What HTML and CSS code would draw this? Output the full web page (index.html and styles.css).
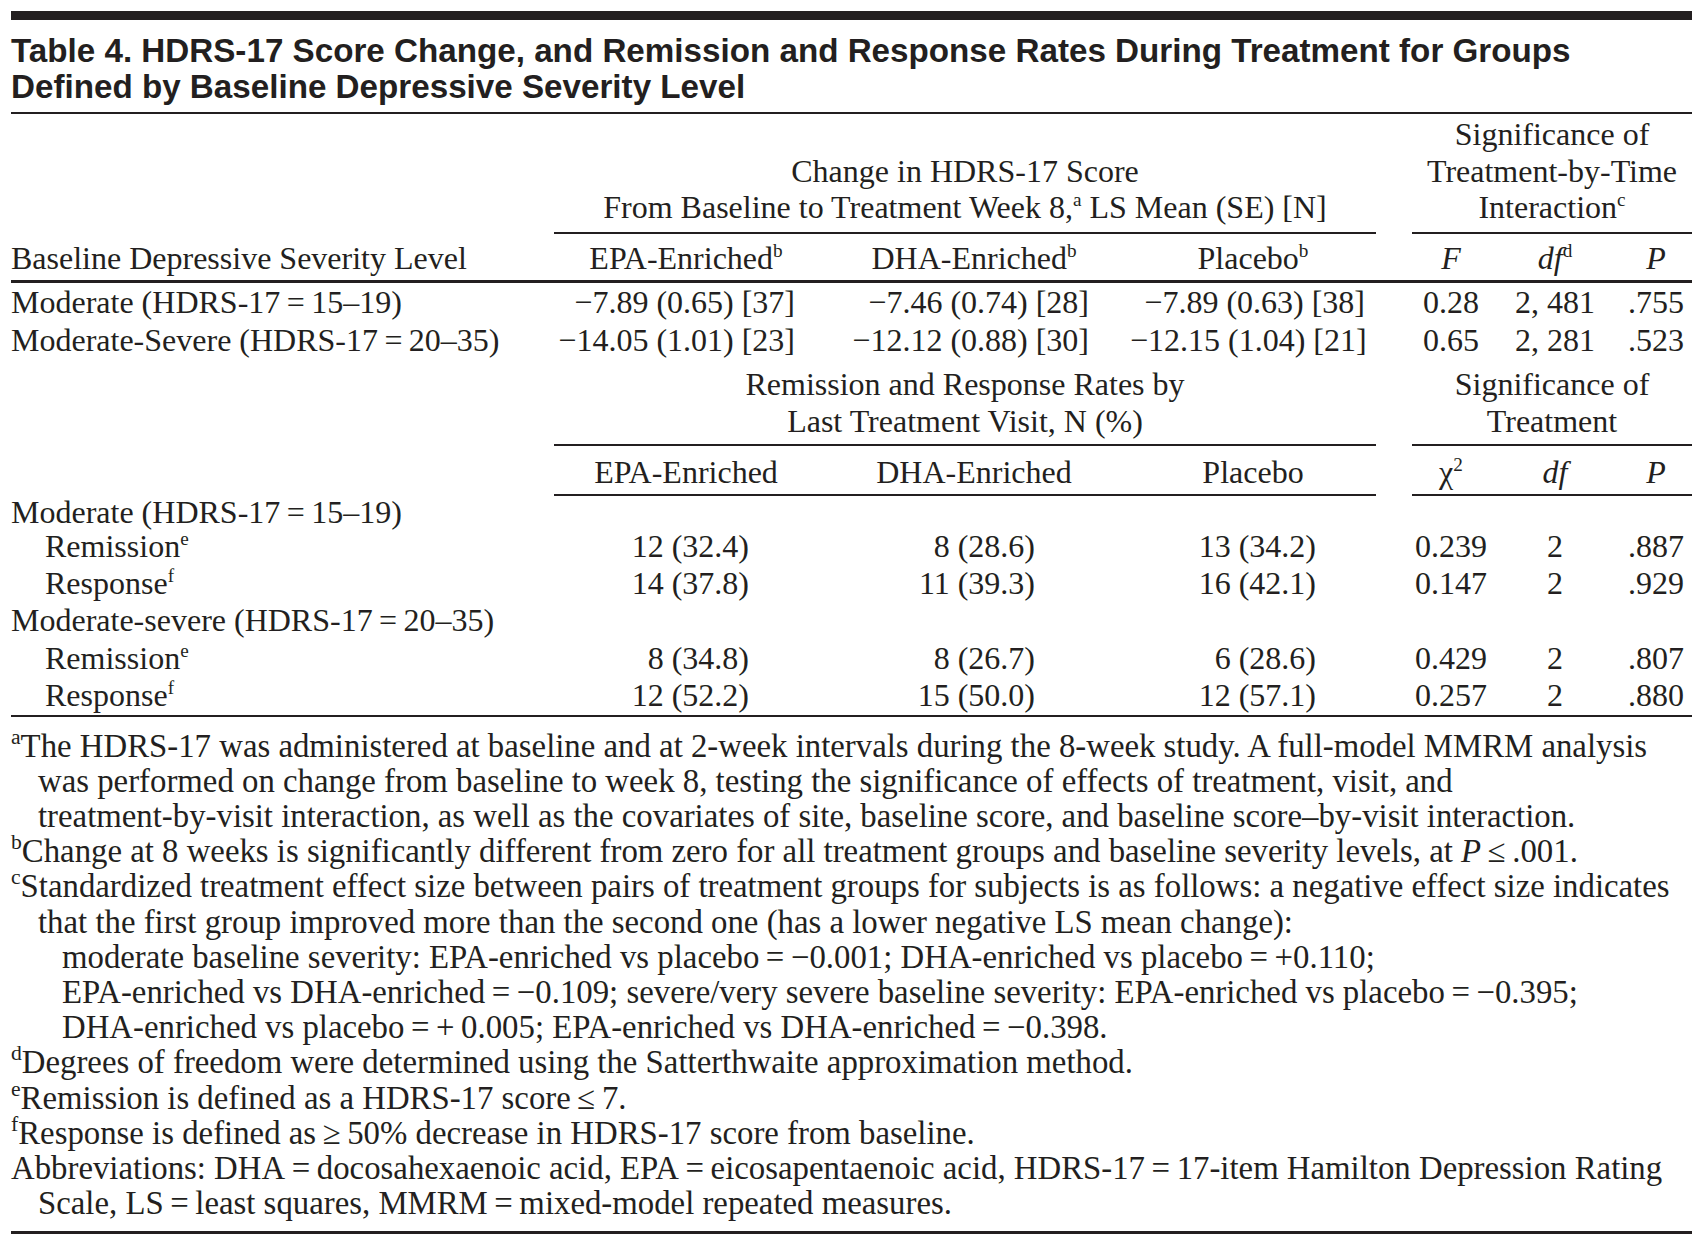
FILE: index.html
```html
<!DOCTYPE html>
<html lang="en">
<head>
<meta charset="utf-8">
<title>Table 4</title>
<link rel="stylesheet" href="styles.css">
</head>
<body>
<div class="page">
  <div class="topbar"></div>
  <h1 class="title">Table 4. HDRS-17 Score Change, and Remission and Response Rates During Treatment for Groups<br>Defined by Baseline Depressive Severity Level</h1>

  <table class="tbl">
    <colgroup>
      <col class="c-lbl"><col class="c-epa"><col class="c-dha"><col class="c-pla"><col class="c-gap"><col class="c-s1"><col class="c-s2"><col class="c-s3">
    </colgroup>
    <thead>
      <tr class="r-group">
        <th class="lbl"></th>
        <th class="span" colspan="3">Change in HDRS-17 Score<br>From Baseline to Treatment Week 8,<sup>a</sup> LS Mean (SE) [N]</th>
        <th class="gap"></th>
        <th class="span" colspan="3">Significance of<br>Treatment-by-Time<br>Interaction<sup>c</sup></th>
      </tr>
      <tr class="r-cols">
        <th class="lbl">Baseline Depressive Severity Level</th>
        <th>EPA-Enriched<sup>b</sup></th>
        <th>DHA-Enriched<sup>b</sup></th>
        <th>Placebo<sup>b</sup></th>
        <th class="gap"></th>
        <th><i>F</i></th>
        <th><i>df</i><sup>d</sup></th>
        <th><i>P</i></th>
      </tr>
    </thead>
    <tbody class="sec1">
      <tr class="r-data">
        <td class="lbl">Moderate (HDRS-17&#8201;=&#8201;15–19)</td>
        <td>−7.89 (0.65) [37]</td>
        <td>−7.46 (0.74) [28]</td>
        <td>−7.89 (0.63) [38]</td>
        <td class="gap"></td>
        <td>0.28</td>
        <td>2, 481</td>
        <td>.755</td>
      </tr>
      <tr class="r-data">
        <td class="lbl">Moderate-Severe (HDRS-17&#8201;=&#8201;20–35)</td>
        <td>−14.05 (1.01) [23]</td>
        <td>−12.12 (0.88) [30]</td>
        <td>−12.15 (1.04) [21]</td>
        <td class="gap"></td>
        <td>0.65</td>
        <td>2, 281</td>
        <td>.523</td>
      </tr>
    </tbody>
    <tbody class="sec2">
      <tr class="r-group2">
        <th class="lbl"></th>
        <th class="span" colspan="3">Remission and Response Rates by<br>Last Treatment Visit, N (%)</th>
        <th class="gap"></th>
        <th class="span" colspan="3">Significance of<br>Treatment</th>
      </tr>
      <tr class="r-cols2">
        <th class="lbl"></th>
        <th class="ul">EPA-Enriched</th>
        <th class="ul">DHA-Enriched</th>
        <th class="ul">Placebo</th>
        <th class="gap"></th>
        <th class="ul">χ<sup>2</sup></th>
        <th class="ul"><i>df</i></th>
        <th class="ul"><i>P</i></th>
      </tr>
      <tr class="r-first">
        <td class="lbl">Moderate (HDRS-17&#8201;=&#8201;15–19)</td>
        <td></td><td></td><td></td><td class="gap"></td><td></td><td></td><td></td>
      </tr>
      <tr class="r-rate">
        <td class="lbl sub">Remission<sup>e</sup></td>
        <td>12 (32.4)</td>
        <td>8 (28.6)</td>
        <td>13 (34.2)</td>
        <td class="gap"></td>
        <td>0.239</td>
        <td>2</td>
        <td>.887</td>
      </tr>
      <tr class="r-rate">
        <td class="lbl sub">Response<sup>f</sup></td>
        <td>14 (37.8)</td>
        <td>11 (39.3)</td>
        <td>16 (42.1)</td>
        <td class="gap"></td>
        <td>0.147</td>
        <td>2</td>
        <td>.929</td>
      </tr>
      <tr class="r-rate">
        <td class="lbl">Moderate-severe (HDRS-17&#8201;=&#8201;20–35)</td>
        <td></td><td></td><td></td><td class="gap"></td><td></td><td></td><td></td>
      </tr>
      <tr class="r-rate">
        <td class="lbl sub">Remission<sup>e</sup></td>
        <td>8 (34.8)</td>
        <td>8 (26.7)</td>
        <td>6 (28.6)</td>
        <td class="gap"></td>
        <td>0.429</td>
        <td>2</td>
        <td>.807</td>
      </tr>
      <tr class="r-rate">
        <td class="lbl sub">Response<sup>f</sup></td>
        <td>12 (52.2)</td>
        <td>15 (50.0)</td>
        <td>12 (57.1)</td>
        <td class="gap"></td>
        <td>0.257</td>
        <td>2</td>
        <td>.880</td>
      </tr>
    </tbody>
  </table>

  <div class="notes">
    <div class="note"><sup>a</sup>The HDRS-17 was administered at baseline and at 2-week intervals during the 8-week study. A full-model MMRM analysis<br>was performed on change from baseline to week 8, testing the significance of effects of treatment, visit, and<br>treatment-by-visit interaction, as well as the covariates of site, baseline score, and baseline score–by-visit interaction.</div>
    <div class="note"><sup>b</sup>Change at 8 weeks is significantly different from zero for all treatment groups and baseline severity levels, at <i>P</i>&#8201;≤&#8201;.001.</div>
    <div class="note"><sup>c</sup>Standardized treatment effect size between pairs of treatment groups for subjects is as follows: a negative effect size indicates<br>that the first group improved more than the second one (has a lower negative LS mean change):
      <div class="subnote">moderate baseline severity: EPA-enriched vs placebo&#8201;=&#8201;−0.001; DHA-enriched vs placebo&#8201;=&#8201;+0.110;<br>EPA-enriched vs DHA-enriched&#8201;=&#8201;−0.109; severe/very severe baseline severity: EPA-enriched vs placebo&#8201;=&#8201;−0.395;<br>DHA-enriched vs placebo&#8201;=&#8201;+&#8201;0.005; EPA-enriched vs DHA-enriched&#8201;=&#8201;−0.398.</div>
    </div>
    <div class="note"><sup>d</sup>Degrees of freedom were determined using the Satterthwaite approximation method.</div>
    <div class="note"><sup>e</sup>Remission is defined as a HDRS-17 score&#8201;≤&#8201;7.</div>
    <div class="note"><sup>f</sup>Response is defined as&#8201;≥&#8201;50% decrease in HDRS-17 score from baseline.</div>
    <div class="note">Abbreviations: DHA&#8201;=&#8201;docosahexaenoic acid, EPA&#8201;=&#8201;eicosapentaenoic acid, HDRS-17&#8201;=&#8201;17-item Hamilton Depression Rating<br>Scale, LS&#8201;=&#8201;least squares, MMRM&#8201;=&#8201;mixed-model repeated measures.</div>
  </div>
</div>
</body>
</html>
```

FILE: styles.css
```css
* { box-sizing: border-box; }

body {
  margin: 0;
  background: #ffffff;
  color: #231f20;
  font-family: "Liberation Serif", "Times New Roman", serif;
}

.page {
  width: 1681px;
  margin: 11px 0 0 11px;
}

.topbar {
  height: 9px;
  background: #231f20;
}

.title {
  margin: 0;
  padding: 13px 0 7px;
  font-family: "Liberation Sans", Arial, sans-serif;
  font-weight: 700;
  font-size: 33.2px;
  line-height: 36px;
  border-bottom: 2px solid #231f20;
}

sup {
  font-size: 0.6em;
  line-height: 0;
  vertical-align: 0.62em;
}

/* ---------- table ---------- */
.tbl {
  width: 1681px;
  table-layout: fixed;
  border-collapse: separate;
  border-spacing: 0;
  font-size: 32px;
  border-bottom: 2px solid #231f20;
}

.c-lbl { width: 543px; }
.c-epa { width: 264px; }
.c-dha { width: 312px; }
.c-pla { width: 246px; }
.c-gap { width: 36px; }
.c-s1 { width: 78px; }
.c-s2 { width: 130px; }
.c-s3 { width: 72px; }

.tbl th,
.tbl td {
  padding: 0;
  font-weight: 400;
  white-space: nowrap;
  text-align: center;
}

.tbl .lbl { text-align: left; }
.tbl .lbl.sub { padding-left: 34px; }

/* header: group titles */
.r-group th {
  line-height: 36.5px;
  padding: 2px 0 6px;
  vertical-align: bottom;
}
.r-group .span { border-bottom: 2px solid #231f20; }

/* header: column titles */
.r-cols th {
  line-height: 36px;
  padding: 6px 0 4px;
  border-bottom: 3px solid #231f20;
}

/* section 1 rows */
.r-data td { line-height: 38px; }
.sec1 td:nth-child(2) { text-align: right; padding-right: 23px; }
.sec1 td:nth-child(3) { text-align: right; padding-right: 41px; }
.sec1 td:nth-child(4) { text-align: right; padding-right: 11px; }

/* section 2 headers */
.r-group2 th {
  line-height: 37px;
  padding: 7px 0 4px;
  vertical-align: bottom;
}
.r-group2 .span { border-bottom: 2px solid #231f20; }

.r-cols2 th {
  line-height: 36px;
  padding: 8px 0 4px;
}
.r-cols2 .ul { border-bottom: 2px solid #231f20; }

/* section 2 rows */
.r-first td { line-height: 32px; }
.r-rate td { line-height: 37.4px; }
.sec2 td:nth-child(2) { text-align: right; padding-right: 69px; }
.sec2 td:nth-child(3) { text-align: right; padding-right: 95px; }
.sec2 td:nth-child(4) { text-align: right; padding-right: 60px; }
.sec2 td.lbl { text-align: left; padding-right: 0; }

/* ---------- footnotes ---------- */
.notes {
  padding: 12px 0 10px;
  font-size: 32.8px;
  line-height: 35.2px;
  border-bottom: 3px solid #231f20;
  white-space: nowrap;
}

.note {
  padding-left: 27px;
  text-indent: -27px;
}

.note sup {
  font-size: 0.66em;
}

.subnote {
  padding-left: 24px;
  text-indent: 0;
}
```
